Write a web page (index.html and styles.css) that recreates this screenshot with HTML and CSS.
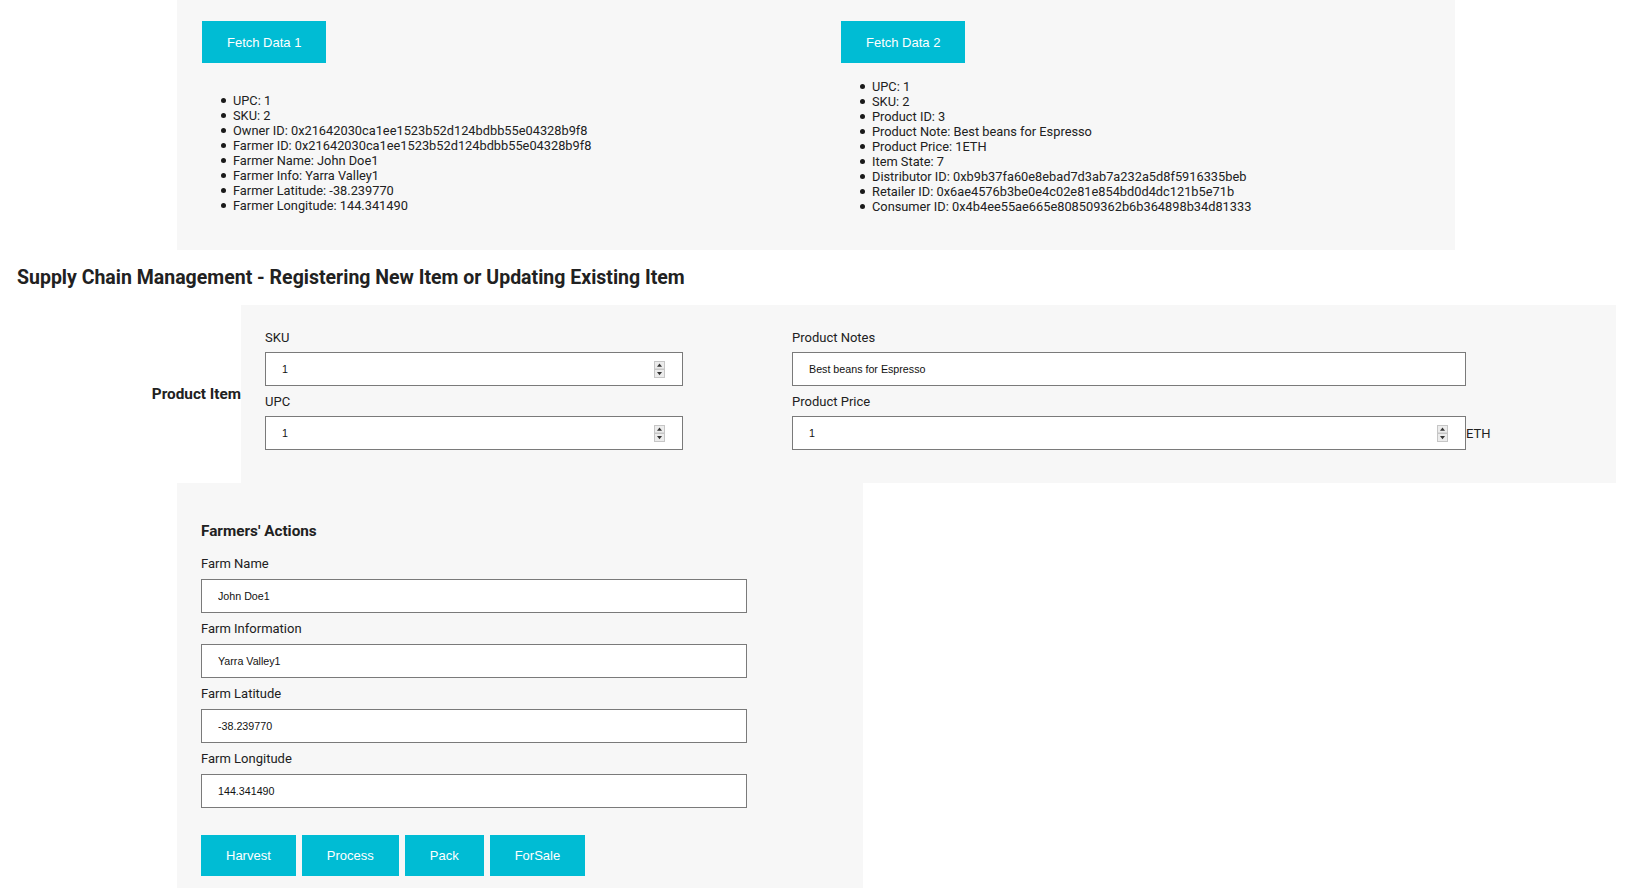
FILE: index.html
```html
<!DOCTYPE html>
<html lang="en">
<head>
<meta charset="utf-8">
<title>Supply Chain Management</title>
<link rel="stylesheet" href="styles.css">
</head>
<body>
<div class="top">
  <section class="fetch fetch-1">
    <button class="btn btn-fetch">Fetch Data 1</button>
    <ul class="info">
      <li>UPC: 1</li>
      <li>SKU: 2</li>
      <li>Owner ID: 0x21642030ca1ee1523b52d124bdbb55e04328b9f8</li>
      <li>Farmer ID: 0x21642030ca1ee1523b52d124bdbb55e04328b9f8</li>
      <li>Farmer Name: John Doe1</li>
      <li>Farmer Info: Yarra Valley1</li>
      <li>Farmer Latitude: -38.239770</li>
      <li>Farmer Longitude: 144.341490</li>
    </ul>
  </section>
  <section class="fetch fetch-2">
    <button class="btn btn-fetch">Fetch Data 2</button>
    <ul class="info">
      <li>UPC: 1</li>
      <li>SKU: 2</li>
      <li>Product ID: 3</li>
      <li>Product Note: Best beans for Espresso</li>
      <li>Product Price: 1ETH</li>
      <li>Item State: 7</li>
      <li>Distributor ID: 0xb9b37fa60e8ebad7d3ab7a232a5d8f5916335beb</li>
      <li>Retailer ID: 0x6ae4576b3be0e4c02e81e854bd0d4dc121b5e71b</li>
      <li>Consumer ID: 0x4b4ee55ae665e808509362b6b364898b34d81333</li>
    </ul>
  </section>
</div>

<h2 class="title">Supply Chain Management - Registering New Item or Updating Existing Item</h2>

<div class="product-row">
  <div class="row-label">Product Item</div>
  <div class="product-panel">
    <div class="col col-left">
      <div class="field">
        <label class="lbl">SKU</label>
        <div class="box num-box">
          <input class="inp" type="text" value="1">
          <svg class="spin" width="11" height="17" viewBox="0 0 11 17"><rect x="0.5" y="0.5" width="10" height="7.5" fill="#ececec" stroke="#c6c6c6"/><rect x="0.5" y="8.5" width="10" height="8" fill="#ececec" stroke="#c6c6c6"/><path d="M5.5 2.5 L8 5.8 H3Z" fill="#333"/><path d="M3 11 H8 L5.5 14.3Z" fill="#333"/></svg>
        </div>
      </div>
      <div class="field">
        <label class="lbl">UPC</label>
        <div class="box num-box">
          <input class="inp" type="text" value="1">
          <svg class="spin" width="11" height="17" viewBox="0 0 11 17"><rect x="0.5" y="0.5" width="10" height="7.5" fill="#ececec" stroke="#c6c6c6"/><rect x="0.5" y="8.5" width="10" height="8" fill="#ececec" stroke="#c6c6c6"/><path d="M5.5 2.5 L8 5.8 H3Z" fill="#333"/><path d="M3 11 H8 L5.5 14.3Z" fill="#333"/></svg>
        </div>
      </div>
    </div>
    <div class="col col-right">
      <div class="field">
        <label class="lbl">Product Notes</label>
        <div class="box">
          <input class="inp" type="text" value="Best beans for Espresso">
        </div>
      </div>
      <div class="field">
        <label class="lbl">Product Price</label>
        <div class="price-line">
          <div class="box num-box price-box">
            <input class="inp" type="text" value="1">
            <svg class="spin" width="11" height="17" viewBox="0 0 11 17"><rect x="0.5" y="0.5" width="10" height="7.5" fill="#ececec" stroke="#c6c6c6"/><rect x="0.5" y="8.5" width="10" height="8" fill="#ececec" stroke="#c6c6c6"/><path d="M5.5 2.5 L8 5.8 H3Z" fill="#333"/><path d="M3 11 H8 L5.5 14.3Z" fill="#333"/></svg>
          </div>
          <span class="unit">ETH</span>
        </div>
      </div>
    </div>
  </div>
</div>

<div class="farmers">
  <h3 class="sub">Farmers' Actions</h3>
  <div class="field farm-field">
    <label class="lbl">Farm Name</label>
    <div class="box farm-box"><input class="inp" type="text" value="John Doe1"></div>
  </div>
  <div class="field farm-field">
    <label class="lbl">Farm Information</label>
    <div class="box farm-box"><input class="inp" type="text" value="Yarra Valley1"></div>
  </div>
  <div class="field farm-field">
    <label class="lbl">Farm Latitude</label>
    <div class="box farm-box"><input class="inp" type="text" value="-38.239770"></div>
  </div>
  <div class="field farm-field">
    <label class="lbl">Farm Longitude</label>
    <div class="box farm-box"><input class="inp" type="text" value="144.341490"></div>
  </div>
  <div class="actions">
    <button class="btn btn-act">Harvest</button>
    <button class="btn btn-act">Process</button>
    <button class="btn btn-act">Pack</button>
    <button class="btn btn-act">ForSale</button>
  </div>
</div>
</body>
</html>
```

FILE: styles.css
```css
body {
  margin: 0;
  font-family: Roboto, "Liberation Sans", sans-serif;
  color: #212121;
  background: #ffffff;
}

.top {
  margin-left: 177px;
  width: 1278px;
  height: 250px;
  background: #f7f7f7;
  display: grid;
  grid-template-columns: 639px 639px;
}

.fetch {
  padding: 21px 25px 0;
}

.btn {
  display: block;
  background: #00bcd4;
  color: #ffffff;
  border: 0;
  padding: 0 25px;
  font-family: "Liberation Sans", Arial, sans-serif;
  font-size: 13px;
  cursor: pointer;
}

.btn-fetch {
  height: 42px;
}

.info {
  margin: 0;
  padding-left: 31px;
  list-style: none;
  font-size: 12.8px;
  line-height: 15px;
}

.info li::before {
  content: "";
  display: inline-block;
  width: 5px;
  height: 5px;
  border-radius: 50%;
  background: #1a1a1a;
  margin-left: -12px;
  margin-right: 7px;
  vertical-align: 2px;
}

.fetch-1 .info {
  margin-top: 30px;
}

.fetch-2 .info {
  margin-top: 16px;
}

.title {
  margin: 16px 0 15px 17px;
  font-size: 19.5px;
  line-height: 24px;
  font-weight: 700;
}

.product-row {
  display: flex;
  align-items: center;
}

.row-label {
  width: 241px;
  text-align: right;
  font-size: 15.3px;
  font-weight: 700;
}

.product-panel {
  width: 1375px;
  height: 178px;
  box-sizing: border-box;
  background: #f7f7f7;
  padding: 25px 0 0 24px;
  display: flex;
  gap: 109px;
}

.col-left {
  width: 418px;
}

.col-right {
  width: 674px;
}

.lbl {
  display: block;
  font-size: 13px;
  line-height: 15px;
  margin-bottom: 7px;
}

.field + .field {
  margin-top: 8px;
}

.box {
  display: flex;
  align-items: center;
  height: 34px;
  box-sizing: border-box;
  border: 1px solid #7a7a7a;
  background: #ffffff;
  padding: 0 17px 0 16px;
}

.inp {
  flex: 1;
  min-width: 0;
  border: 0;
  outline: none;
  padding: 0;
  background: transparent;
  font-family: "Liberation Sans", Arial, sans-serif;
  font-size: 10.7px;
  color: #111111;
}

.spin {
  flex: none;
  display: block;
}

.price-line {
  display: flex;
  align-items: center;
}

.price-box {
  width: 674px;
  flex: none;
}

.unit {
  font-size: 13px;
}

.farmers {
  margin-left: 177px;
  width: 686px;
  box-sizing: border-box;
  background: #f7f7f7;
  padding: 39px 24px 12px;
}

.sub {
  margin: 0 0 16px;
  font-size: 15.3px;
  line-height: 18px;
  font-weight: 700;
}

.farm-field .lbl {
  margin-bottom: 8px;
}

.farm-box {
  width: 546px;
}

.actions {
  margin-top: 27px;
  display: flex;
  gap: 6px;
}

.btn-act {
  height: 41px;
}
```
